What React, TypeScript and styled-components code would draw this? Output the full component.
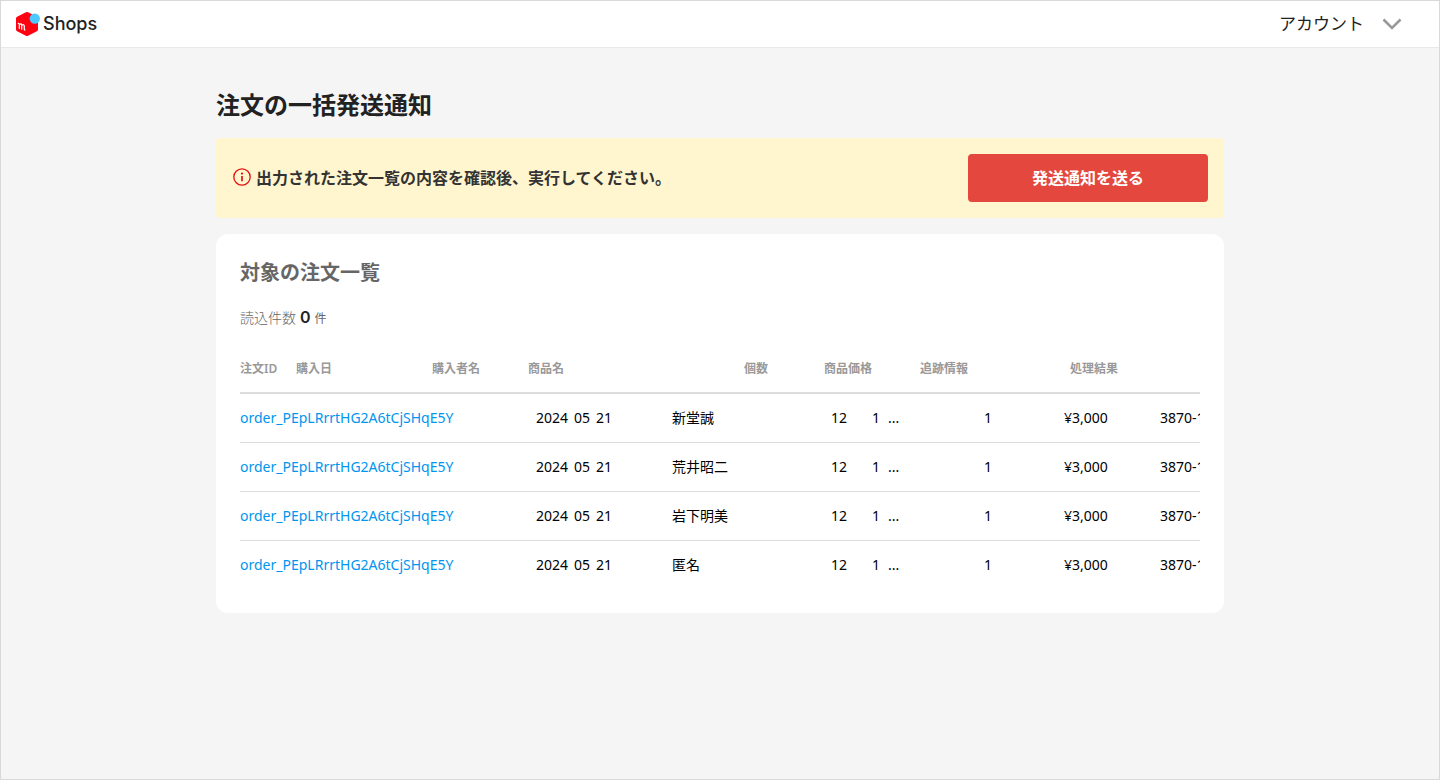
import React from "react";
import styled, { createGlobalStyle } from "styled-components";

const Global = createGlobalStyle`
  * { box-sizing: border-box; }
  body {
    margin: 0;
    background: #f5f5f5;
    color: #222;
    font-family: "Noto Sans", "Noto Sans CJK JP", sans-serif;
  }
`;

const Page = styled.div`
  min-height: 100vh;
  border: 1px solid #d9d9d9;
`;

const Header = styled.header`
  display: flex;
  align-items: center;
  justify-content: space-between;
  height: 47px;
  padding: 0 35px 0 14px;
  background: #fff;
  border-bottom: 1px solid #e8e8e8;
`;

const Brand = styled.a`
  display: flex;
  align-items: center;
  gap: 2px;
  color: #222;
  font-family: Inter, sans-serif;
  font-size: 18px;
  line-height: 24px;
  font-weight: 500;
  text-decoration: none;
`;

const AccountButton = styled.button`
  display: flex;
  align-items: center;
  gap: 16px;
  padding: 0;
  border: 0;
  background: none;
  color: #222;
  font-family: inherit;
  font-size: 17px;
  line-height: 24px;
`;

const Main = styled.main`
  max-width: 1040px;
  margin: 0 auto;
  padding: 40px 16px;
`;

const PageTitle = styled.h1`
  margin: 0 0 18px;
  font-size: 24px;
  line-height: 32px;
  font-weight: 600;
  font-family: "Noto Sans CJK JP", sans-serif;
`;

const Notice = styled.section`
  display: flex;
  align-items: center;
  justify-content: space-between;
  margin-bottom: 16px;
  padding: 16px;
  border-radius: 4px;
  background: #fff5cf;
`;

const NoticeText = styled.p`
  display: flex;
  align-items: center;
  gap: 4px;
  margin: 0;
  color: #333;
  font-size: 16px;
  line-height: 24px;
  font-weight: 600;
`;

const SendButton = styled.button`
  width: 240px;
  height: 48px;
  padding: 0 16px 2px;
  border: 0;
  border-radius: 4px;
  background: #e4473d;
  color: #fff;
  font-family: inherit;
  font-size: 16px;
  font-weight: 600;
`;

const Card = styled.section`
  padding: 24px;
  border-radius: 12px;
  background: #fff;
`;

const CardTitle = styled.h2`
  margin: 0 0 16px;
  color: #666;
  font-size: 20px;
  line-height: 30px;
  font-weight: 600;
`;

const Count = styled.p`
  display: flex;
  align-items: baseline;
  gap: 4px;
  margin: 0 0 12px;
  color: #666;
  font-size: 14px;
  line-height: 28px;
  font-weight: 300;
`;

const CountValue = styled.strong`
  color: #222;
  font-family: Inter, sans-serif;
  font-size: 16px;
  line-height: 24px;
  font-weight: 600;
`;

const CountUnit = styled.span`
  font-size: 12px;
  line-height: 24px;
  font-weight: 400;
`;

const TableScroll = styled.div`
  overflow: hidden;
`;

const Table = styled.table`
  display: block;
`;

const Row = styled.tr<{ $first: number }>`
  display: grid;
  grid-template-columns: ${(p) => p.$first}px 136px 96px 216px 80px 96px 150px 1fr;
`;

const HeadGroup = styled.thead`
  display: block;
  border-bottom: 2px solid #ddd;
`;

const BodyGroup = styled.tbody`
  display: block;
`;

const BodyRow = styled(Row)`
  & + & {
    border-top: 1px solid #ddd;
  }
`;

const HeadCell = styled.th`
  padding: 15px 0 13px;
  color: #999;
  font-size: 12px;
  line-height: 20px;
  font-weight: 600;
  text-align: left;
  white-space: nowrap;
`;

const Cell = styled.td`
  padding: 12px 0;
  color: #000;
  font-size: 14px;
  line-height: 24px;
  white-space: nowrap;
`;

const OrderLink = styled.a`
  color: #0095ee;
  text-decoration: none;
`;

const DateText = styled.time`
  display: flex;
  gap: 6px;
`;

const ProductName = styled.span`
  display: flex;
  gap: 8px;
  padding-left: 63px;
`;

const ProductCount = styled.span`
  width: 33px;
`;

const Logo = () => (
  <svg width="26" height="26" viewBox="0 0 26 26" aria-hidden="true">
    <path
      d="M10.9 1.3Q12 .7 13.1 1.3L21.9 5.8Q23 6.4 23 7.6V18.4Q23 19.6 21.9 20.2L13.1 24.7Q12 25.3 10.9 24.7L2.1 20.2Q1 19.6 1 18.4V7.6Q1 6.4 2.1 5.8Z"
      fill="#ff0211"
    />
    <circle cx="19.800" cy="7.600" r="5.200" fill="#4dc9ff" />
    <path
      d="M3.300 12.500Q4.300 12.100 4.300 13.500V17.500M4.300 13.800Q6.700 11.600 6.700 14.200V18.200M6.700 14.500Q9.300 12.600 9.300 15.200V18Q9.300 19.200 10 19"
      fill="none"
      stroke="#fff"
      strokeWidth="1.200"
      strokeLinecap="round"
    />
  </svg>
);

const Chevron = () => (
  <svg width="24" height="24" viewBox="0 0 24 24" fill="none" aria-hidden="true">
    <path d="M3.500 7.500l8.500 8.500 8.500-8.500" stroke="#999" strokeWidth="2.600" />
  </svg>
);

const InfoIcon = () => (
  <svg width="20" height="20" viewBox="0 0 20 20" fill="none" aria-hidden="true">
    <circle cx="10" cy="9" r="8.200" stroke="#e60f0f" strokeWidth="1.300" />
    <path d="M10 8v5.200" stroke="#e60f0f" strokeWidth="1.700" />
    <circle cx="10" cy="5.600" r="1.100" fill="#e60f0f" />
  </svg>
);

const columns = ["注文ID", "購入日", "購入者名", "商品名", "個数", "商品価格", "追跡情報", "処理結果"];
const buyers = ["新堂誠", "荒井昭二", "岩下明美", "匿名"];

export default function App() {
  return (
    <>
      <Global />
      <Page>
        <Header>
          <Brand href="#">
            <Logo />
            Shops
          </Brand>
          <AccountButton type="button">
            アカウント
            <Chevron />
          </AccountButton>
        </Header>
        <Main>
          <PageTitle>注文の一括発送通知</PageTitle>
          <Notice>
            <NoticeText>
              <InfoIcon />
              出力された注文一覧の内容を確認後、実行してください。
            </NoticeText>
            <SendButton type="button">発送通知を送る</SendButton>
          </Notice>
          <Card>
            <CardTitle>対象の注文一覧</CardTitle>
            <Count>
              読込件数 <CountValue>0</CountValue> <CountUnit>件</CountUnit>
            </Count>
            <TableScroll>
              <Table>
                <HeadGroup>
                  <Row $first={56}>
                    {columns.map((c) => (
                      <HeadCell key={c} scope="col">{c}</HeadCell>
                    ))}
                  </Row>
                </HeadGroup>
                <BodyGroup>
                  {buyers.map((buyer) => (
                    <BodyRow key={buyer} $first={296}>
                      <Cell><OrderLink href="#">order_PEpLRrrtHG2A6tCjSHqE5Y</OrderLink></Cell>
                      <Cell>
                        <DateText dateTime="2024-05-21">
                          <span>2024</span>
                          <span>05</span>
                          <span>21</span>
                        </DateText>
                      </Cell>
                      <Cell>{buyer}</Cell>
                      <Cell>
                        <ProductName>
                          <ProductCount>12</ProductCount>
                          <span>1</span>
                          <span>...</span>
                        </ProductName>
                      </Cell>
                      <Cell>1</Cell>
                      <Cell>¥3,000</Cell>
                      <Cell>3870-1234-5678</Cell>
                    </BodyRow>
                  ))}
                </BodyGroup>
              </Table>
            </TableScroll>
          </Card>
        </Main>
      </Page>
    </>
  );
}
